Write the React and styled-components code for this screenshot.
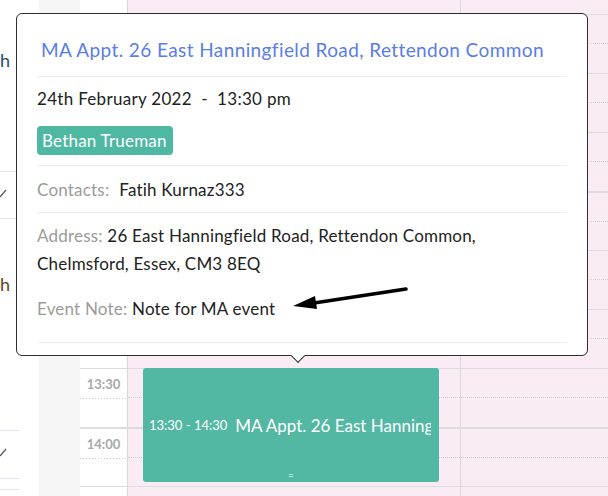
import React from "react";
import styled, { createGlobalStyle } from "styled-components";

const GlobalStyle = createGlobalStyle`
  html, body {
    margin: 0;
    padding: 0;
    background: #fff;
    font-family: Lato, "Open Sans", Arial, sans-serif;
    overflow: hidden;
  }
  * { box-sizing: border-box; }
`;

// half-hour rows of the day grid; only the visible ones carry a label
const slots = [
  { time: "10:00" },
  { time: "10:30" },
  { time: "11:00" },
  { time: "11:30" },
  { time: "12:00", thick: true },
  { time: "12:30" },
  { time: "13:00" },
  { time: "13:30", label: true, event: true },
  { time: "14:00", label: true, thick: true },
  { time: "14:30", label: true },
];

const Check = () => (
  <svg width="8" height="10" viewBox="0 0 8 10">
    <path d="M0 8 L6 1" stroke="#555" strokeWidth="1.2" fill="none" />
  </svg>
);

const App = () => {
  return (
    <>
      <GlobalStyle />
      <Page>
        <SideList>
          <ListCol>
            <ListItem $h={172}>
              <Cut $color="#2c4a66" $top={49}>h</Cut>
            </ListItem>
            <ListItem $h={47}>
              <CheckWrap>
                <Check />
              </CheckWrap>
            </ListItem>
            <ListItem $h={212}>
              <Cut $color="#5c4322" $top={54}>h</Cut>
            </ListItem>
            <ListItem $h={48}>
              <CheckWrap>
                <Check />
              </CheckWrap>
            </ListItem>
            <ListItem $h={11} />
            <ListItem $h={40} />
          </ListCol>
        </SideList>
        <Gutter />
        <Grid>
          {slots.map((s) => (
            <HalfHour key={s.time} $thick={s.thick}>
              <TimeCell>{s.label ? s.time : ""}</TimeCell>
              <DayCell $w="333px">
                <Quarter />
                {s.event && (
                  <Event>
                    <EventTime>13:30 - 14:30</EventTime>
                    <EventTitle>MA Appt. 26 East Hanningfield Road, Rettendon Common</EventTitle>
                    <Handle>=</Handle>
                  </Event>
                )}
              </DayCell>
              <DayCell>
                <Quarter />
              </DayCell>
            </HalfHour>
          ))}
        </Grid>

        <Popover>
          <TitleRow>MA Appt. 26 East Hanningfield Road, Rettendon Common</TitleRow>
          <Section $pt={11} $pb={10}>
            <DateLine>24th February 2022&nbsp;&nbsp;-&nbsp;&nbsp;13:30 pm</DateLine>
            <Badge>Bethan Trueman</Badge>
          </Section>
          <Section $pt={13} $pb={11}>
            <Line>
              <Label>Contacts:</Label>
              <Value $gap={10}>Fatih Kurnaz333</Value>
            </Line>
          </Section>
          <Section $pt={9} $pb={19}>
            <Para>
              <Label>Address:</Label> 26 East Hanningfield Road, Rettendon Common,
              <br />
              Chelmsford, Essex, CM3 8EQ
            </Para>
            <Para $mt={17}>
              <Label>Event Note:</Label> Note for MA event
            </Para>
          </Section>
          <Footer />
          <Tip />
        </Popover>

        <Annotation width="130" height="34" viewBox="0 0 130 34">
          <line x1="116" y1="9" x2="24" y2="23" stroke="#000" strokeWidth="3.6" strokeLinecap="round" />
          <polygon points="3,26 25,16 27,29" fill="#000" />
        </Annotation>
      </Page>
    </>
  );
};

const Page = styled.div`
  position: relative;
  width: 608px;
  height: 496px;
  overflow: hidden;
  display: flex;
`;

const SideList = styled.div`
  width: 39px;
  flex-shrink: 0;
  background: #fff;
`;

const ListCol = styled.div`
  width: 19px;
  display: flex;
  flex-direction: column;
`;

const ListItem = styled.div`
  position: relative;
  height: ${(p) => p.$h}px;
  border-bottom: 1px solid #e4e4ef;
  overflow: hidden;
  &:last-child {
    border-bottom: none;
  }
`;

const Cut = styled.div`
  padding-top: ${(p) => p.$top}px;
  font-size: 18px;
  line-height: 22px;
  color: ${(p) => p.$color};
`;

const CheckWrap = styled.div`
  padding-top: 17px;
  line-height: 0;
`;

const Gutter = styled.div`
  width: 41px;
  flex-shrink: 0;
  background: #f5f5f5;
`;

const Grid = styled.div`
  flex: 1;
  display: flex;
  flex-direction: column;
  margin-top: -45px;
`;

const HalfHour = styled.div`
  display: flex;
  height: 59px;
  flex-shrink: 0;
  border-top: ${(p) => (p.$thick ? "2px" : "1px")} solid #dcdcdc;
`;

const TimeCell = styled.div`
  width: 47px;
  flex-shrink: 0;
  background: #fff;
  padding-top: 7px;
  text-align: center;
  font-size: 13px;
  line-height: 16px;
  font-weight: 700;
  color: #a8a8a8;
  background-image: linear-gradient(to right, #cfcfcf 50%, transparent 50%);
  background-size: 3px 1px;
  background-repeat: repeat-x;
  background-position: 0 29px;
`;

const DayCell = styled.div`
  position: relative;
  width: ${(p) => p.$w || "auto"};
  flex: ${(p) => (p.$w ? "0 0 auto" : "1")};
  background: #f9ecf5;
  border-left: 1px solid #dcd6da;
`;

const Quarter = styled.div`
  height: 29px;
  border-bottom: 1px dotted #d4cdd2;
`;

const Event = styled.div`
  position: absolute;
  z-index: 2;
  top: -1px;
  left: 15px;
  width: 296px;
  height: 114px;
  background: #52b8a3;
  border-radius: 3px;
  display: flex;
  align-items: center;
  padding: 0 8px 0 6px;
  overflow: hidden;
  white-space: nowrap;
  color: #fff;
`;

const EventTime = styled.span`
  font-size: 13px;
  margin-right: 8px;
  flex-shrink: 0;
`;

const EventTitle = styled.span`
  font-size: 17px;
  overflow: hidden;
`;

const Handle = styled.span`
  position: absolute;
  bottom: 2px;
  left: 145px;
  font-size: 10px;
  line-height: 10px;
`;

const Popover = styled.div`
  position: absolute;
  z-index: 10;
  left: 16px;
  top: 13px;
  width: 572px;
  height: 343px;
  background: #fff;
  border: 1px solid #2e2e2e;
  border-radius: 6px;
  padding: 0 20px;
  display: flex;
  flex-direction: column;
`;

const TitleRow = styled.div`
  padding: 24px 0 14px 4px;
  font-size: 19px;
  letter-spacing: 0.4px;
  line-height: 24px;
  color: #5a7de6;
  border-bottom: 1px solid #ededed;
  white-space: nowrap;
`;

const Section = styled.div`
  padding: ${(p) => p.$pt}px 0 ${(p) => p.$pb}px;
  border-bottom: 1px solid #ededed;
  font-size: 17px;
  letter-spacing: 0.2px;
  color: #222;
`;

const DateLine = styled.div`
  line-height: 22px;
  margin-bottom: 16px;
  letter-spacing: 0.3px;
`;

const Badge = styled.span`
  display: inline-block;
  background: #4fb8a2;
  color: #fff;
  border-radius: 4px;
  padding: 0 6px 0 5px;
  height: 29px;
  line-height: 29px;
`;

const Line = styled.div`
  display: flex;
  line-height: 22px;
`;

const Label = styled.span`
  color: #9b9b9b;
`;

const Value = styled.span`
  margin-left: ${(p) => p.$gap}px;
`;

const Para = styled.div`
  line-height: 28px;
  margin-top: ${(p) => p.$mt || 0}px;
`;

const Footer = styled.div`
  flex: 1;
`;

const Tip = styled.div`
  position: absolute;
  left: 276px;
  bottom: -6px;
  width: 10px;
  height: 10px;
  background: #fff;
  border-right: 1px solid #2e2e2e;
  border-bottom: 1px solid #2e2e2e;
  transform: rotate(45deg);
`;

const Annotation = styled.svg`
  position: absolute;
  z-index: 20;
  left: 290px;
  top: 280px;
`;

export default App;
